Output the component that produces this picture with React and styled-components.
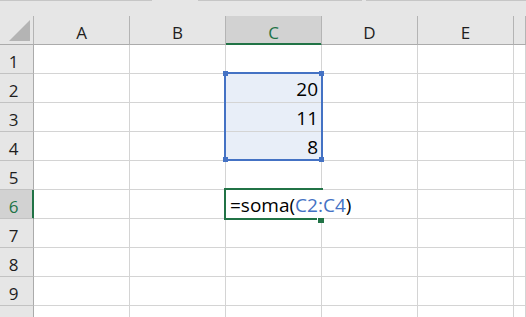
import React from 'react';
import styled, { createGlobalStyle } from 'styled-components';

const GREEN = '#217346';
const BLUE = '#4472c4';

const GlobalStyle = createGlobalStyle`
  html, body { margin: 0; padding: 0; background: #fff; }
  body { font-family: "Open Sans", "Liberation Sans", sans-serif; }
  * { box-sizing: border-box; }
`;

const Sheet = styled.div`
  width: 526px;
  height: 317px;
  overflow: hidden;
  background: #fff;
`;

const TopStrip = styled.div`
  display: flex;
  height: 16px;
  background: #e6e6e6;
`;

const Edge = styled.div`
  flex: ${p => (p.$w ? `0 0 ${p.$w}px` : '1')};
  border-top: 1px solid ${p => (p.$line ? '#c6c6c6' : 'transparent')};
`;

const Row = styled.div`
  display: grid;
  grid-template-columns: 34px repeat(5, 96px) 1fr;
  height: 29px;
`;

const Corner = styled.div`
  background: #e6e6e6;
  border-right: 1px solid #b4b4b4;
  border-bottom: 1px solid #ababab;
  display: flex;
  align-items: flex-end;
  justify-content: flex-end;
  padding: 0 2px 2px 0;
`;

const ColHead = styled.div`
  display: flex;
  align-items: center;
  justify-content: center;
  padding-top: 4px;
  font-size: 17px;
  color: ${p => (p.$active ? GREEN : '#1e1e1e')};
  background: ${p => (p.$active ? '#d2d2d2' : '#e6e6e6')};
  border-right: 1px solid #b4b4b4;
  border-bottom: 1px solid ${p => (p.$active ? GREEN : '#ababab')};
  box-shadow: ${p => (p.$active ? `inset 0 -1px 0 ${GREEN}` : 'none')};
`;

const RowHead = styled.div`
  display: flex;
  align-items: center;
  justify-content: center;
  padding: 4px 6px 0 0;
  font-size: 17px;
  color: ${p => (p.$active ? GREEN : '#1e1e1e')};
  background: ${p => (p.$active ? '#d2d2d2' : '#e6e6e6')};
  border-right: 1px solid ${p => (p.$active ? GREEN : '#ababab')};
  box-shadow: ${p => (p.$active ? `inset -1px 0 0 ${GREEN}` : 'none')};
  border-bottom: 1px solid #c2c2c2;
`;

const Cell = styled.div`
  position: relative;
  display: flex;
  align-items: flex-end;
  justify-content: ${p => (p.$right ? 'flex-end' : 'flex-start')};
  padding: 0 3px 0 4px;
  font-size: 19px;
  line-height: 26px;
  color: #000;
  white-space: nowrap;
  overflow: visible;
  z-index: ${p => (p.$open ? 2 : 0)};
  background: ${p => (p.$sel ? '#e8eef8' : 'transparent')};
  border-bottom: 1px solid #d4d4d4;
  border-right: 1px solid ${p => (p.$open ? 'transparent' : '#d4d4d4')};
`;

const Ref = styled.span`
  color: ${BLUE};
`;

const Body = styled.div`
  position: relative;
`;

const Range = styled.div`
  position: absolute;
  left: 224px;
  top: 27px;
  width: 99px;
  height: 89px;
  border: 2px solid ${BLUE};
  z-index: 3;
`;

const Handle = styled.div`
  position: absolute;
  width: 5px;
  height: 5px;
  background: ${BLUE};
  ${p => (p.$top ? 'top: -3px;' : 'bottom: -3px;')}
  ${p => (p.$left ? 'left: -3px;' : 'right: -3px;')}
`;

const ActiveBox = styled.div`
  position: absolute;
  left: 224px;
  top: 143px;
  width: 99px;
  height: 32px;
  border: 2px solid ${GREEN};
  border-right: none;
  z-index: 3;
`;

const FillHandle = styled.div`
  position: absolute;
  right: -1px;
  top: 28px;
  width: 6px;
  height: 5px;
  background: ${GREEN};
  box-shadow: -1px 0 0 #fff;
`;

const COLS = ['A', 'B', 'C', 'D', 'E', ''];

const cells = {
  '2-C': { text: '20', right: true },
  '3-C': { text: '11', right: true },
  '4-C': { text: '8', right: true },
  '6-C': {
    text: (
      <>
        =soma(<Ref>C2:C4</Ref>)
      </>
    ),
    open: true,
  },
};

export default function App() {
  const rows = [1, 2, 3, 4, 5, 6, 7, 8, 9, 10];
  return (
    <>
      <GlobalStyle />
      <Sheet>
        <TopStrip>
          <Edge $w={152} $line />
          <Edge $w={46} />
          <Edge $w={164} $line />
          <Edge $w={4} />
          <Edge $line />
        </TopStrip>
        <Row>
          <Corner>
            <svg width="22" height="22" viewBox="0 0 22 22">
              <polygon points="21,0 21,21 0,21" fill="#b4b4b4" />
            </svg>
          </Corner>
          {COLS.map((c, i) => (
            <ColHead key={i} $active={c === 'C'}>
              {c}
            </ColHead>
          ))}
        </Row>
        <Body>
          {rows.map(r => (
            <Row key={r}>
              <RowHead $active={r === 6}>{r}</RowHead>
              {COLS.map((c, i) => {
                const d = cells[`${r}-${c}`];
                const sel = c === 'C' && r >= 2 && r <= 4;
                return (
                  <Cell key={i} $right={d && d.right} $open={d && d.open} $sel={sel}>
                    {d ? d.text : null}
                  </Cell>
                );
              })}
            </Row>
          ))}
          <Range>
            <Handle $top $left />
            <Handle $top />
            <Handle $left />
            <Handle />
          </Range>
          <ActiveBox>
            <FillHandle />
          </ActiveBox>
        </Body>
      </Sheet>
    </>
  );
}
